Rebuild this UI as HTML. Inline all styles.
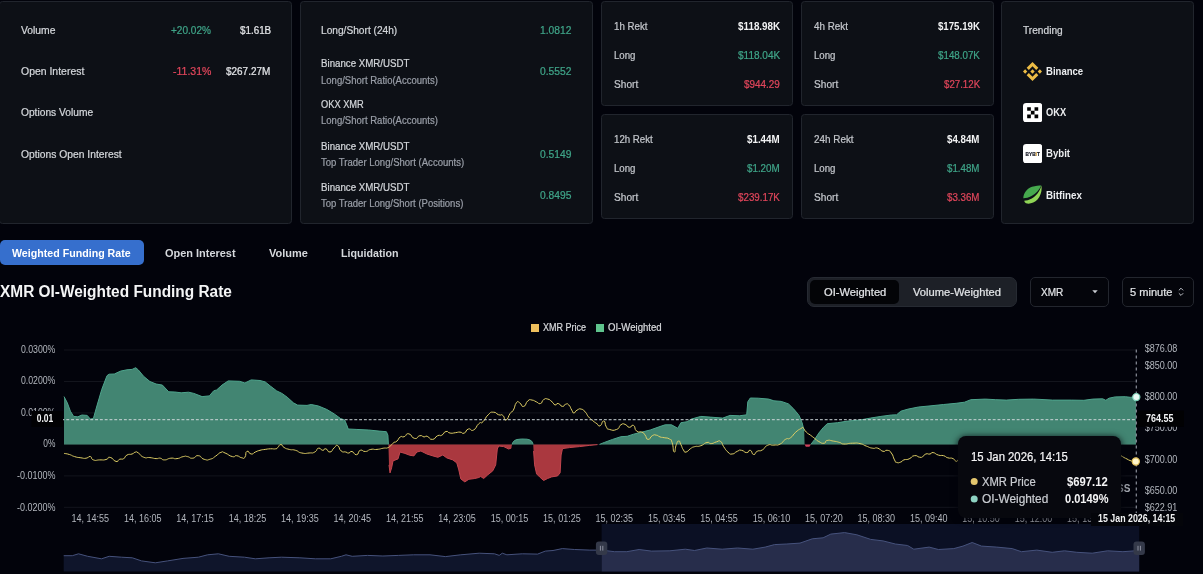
<!DOCTYPE html>
<html lang="en"><head><meta charset="utf-8"><title>XMR OI-Weighted Funding Rate</title>
<style>
html,body{margin:0;padding:0}
body{width:1203px;height:574px;overflow:hidden;position:relative;background:#02030b;font-family:"Liberation Sans",sans-serif;color:#d3d6da}
.card{position:absolute;box-sizing:border-box;background:#0d1016;border:1px solid #21252d;border-radius:3.5px}
.t{position:absolute;white-space:nowrap;line-height:1;transform-origin:0 0;display:block;-webkit-text-stroke:.22px currentColor}
.chart{position:absolute;left:0;top:0}
.tab{position:absolute;left:0;top:240px;width:144px;height:25px;border-radius:5px;background:#366fcd}
.seg{position:absolute;left:807px;top:277px;width:210px;height:29.5px;border-radius:7px;background:#1d2027;border:1px solid #262a32;box-sizing:border-box}
.segon{position:absolute;left:2px;top:2px;width:89px;height:23.5px;border-radius:5px;background:#030407}
.sel{position:absolute;top:277px;height:29.5px;box-sizing:border-box;border:1px solid #23262e;border-radius:5px;background:#04050b}
.ico{position:absolute}
.tabs,.head,.legend{position:absolute;left:0;top:0}
.tip{position:absolute;left:958px;top:436px;width:163px;height:81.5px;border-radius:8px;background:#07080e;box-shadow:0 1px 6px 1px rgba(2,3,11,.75)}
.xlab{position:absolute;left:1091px;top:513px;width:92px;height:12.5px;background:#04050a}
.sq{position:absolute;width:8px;height:8px;top:324px}
#w{position:absolute;left:0;top:0;width:1203px;height:574px;will-change:transform}
</style></head><body><div id="w">
<div class="card stats" style="left:-1px;top:1px;width:293px;height:223px">
<span class="t" style="left:20.5px;top:23.5px;font-size:10px;color:#d3d6da;transform:scaleX(1.034)">Volume</span>
<span class="t" style="left:171.0px;top:23.5px;font-size:10px;color:#3fa488;transform:scaleX(1.006)">+20.02%</span>
<span class="t" style="left:239.5px;top:23.5px;font-size:10px;color:#e4e6e9;transform:scaleX(0.984)">$1.61B</span>
<span class="t" style="left:20.5px;top:64.8px;font-size:10px;color:#d3d6da;transform:scaleX(1.045)">Open Interest</span>
<span class="t" style="left:172.6px;top:64.8px;font-size:10px;color:#e0465b;transform:scaleX(1.052)">-11.31%</span>
<span class="t" style="left:226.4px;top:64.8px;font-size:10px;color:#e4e6e9;transform:scaleX(0.996)">$267.27M</span>
<span class="t" style="left:20.5px;top:106.1px;font-size:10px;color:#d3d6da;transform:scaleX(1.021)">Options Volume</span>
<span class="t" style="left:20.5px;top:147.5px;font-size:10px;color:#d3d6da;transform:scaleX(1.029)">Options Open Interest</span>
</div>
<div class="card ratios" style="left:300px;top:1px;width:293px;height:223px">
<span class="t" style="left:20.2px;top:23.5px;font-size:10px;color:#d3d6da;transform:scaleX(1.016)">Long/Short (24h)</span>
<span class="t" style="left:238.6px;top:23.5px;font-size:10px;color:#3fa488;transform:scaleX(1.026)">1.0812</span>
<span class="t" style="left:20.2px;top:56.7px;font-size:10px;color:#d3d6da;transform:scaleX(0.971)">Binance XMR/USDT</span>
<span class="t" style="left:20.2px;top:73.5px;font-size:10px;color:#9a9fa8;transform:scaleX(0.952)">Long/Short Ratio(Accounts)</span>
<span class="t" style="left:238.6px;top:64.8px;font-size:10px;color:#3fa488;transform:scaleX(1.026)">0.5552</span>
<span class="t" style="left:20.2px;top:98.0px;font-size:10px;color:#d3d6da;transform:scaleX(0.928)">OKX XMR</span>
<span class="t" style="left:20.2px;top:114.0px;font-size:10px;color:#9a9fa8;transform:scaleX(0.952)">Long/Short Ratio(Accounts)</span>
<span class="t" style="left:20.2px;top:139.7px;font-size:10px;color:#d3d6da;transform:scaleX(0.971)">Binance XMR/USDT</span>
<span class="t" style="left:20.2px;top:155.7px;font-size:10px;color:#9a9fa8;transform:scaleX(0.954)">Top Trader Long/Short (Accounts)</span>
<span class="t" style="left:238.6px;top:147.5px;font-size:10px;color:#3fa488;transform:scaleX(1.026)">0.5149</span>
<span class="t" style="left:20.2px;top:180.6px;font-size:10px;color:#d3d6da;transform:scaleX(0.971)">Binance XMR/USDT</span>
<span class="t" style="left:20.2px;top:196.6px;font-size:10px;color:#9a9fa8;transform:scaleX(0.952)">Top Trader Long/Short (Positions)</span>
<span class="t" style="left:238.6px;top:188.8px;font-size:10px;color:#3fa488;transform:scaleX(1.026)">0.8495</span>
</div>
<div class="card rekt1h" style="left:601px;top:1px;width:192px;height:105px">
<span class="t" style="left:12.4px;top:19.5px;font-size:10px;color:#c3c6cb;transform:scaleX(0.972)">1h Rekt</span>
<span class="t" style="left:135.5px;top:19.5px;font-size:10px;color:#f2f3f4;transform:scaleX(0.985);font-weight:700;-webkit-text-stroke:0">$118.98K</span>
<span class="t" style="left:12.2px;top:48.8px;font-size:10px;color:#c3c6cb;transform:scaleX(0.966)">Long</span>
<span class="t" style="left:135.5px;top:48.8px;font-size:10px;color:#3fa488;transform:scaleX(1.003)">$118.04K</span>
<span class="t" style="left:12.0px;top:77.9px;font-size:10px;color:#c3c6cb;transform:scaleX(1.012)">Short</span>
<span class="t" style="left:141.8px;top:77.9px;font-size:10px;color:#e0465b;transform:scaleX(0.993)">$944.29</span>
</div>
<div class="card rekt4h" style="left:801px;top:1px;width:193px;height:105px">
<span class="t" style="left:12.4px;top:19.5px;font-size:10px;color:#c3c6cb;transform:scaleX(0.983)">4h Rekt</span>
<span class="t" style="left:135.8px;top:19.5px;font-size:10px;color:#f2f3f4;transform:scaleX(0.966);font-weight:700;-webkit-text-stroke:0">$175.19K</span>
<span class="t" style="left:12.2px;top:48.8px;font-size:10px;color:#c3c6cb;transform:scaleX(0.966)">Long</span>
<span class="t" style="left:135.8px;top:48.8px;font-size:10px;color:#3fa488;transform:scaleX(0.978)">$148.07K</span>
<span class="t" style="left:12.0px;top:77.9px;font-size:10px;color:#c3c6cb;transform:scaleX(1.012)">Short</span>
<span class="t" style="left:141.6px;top:77.9px;font-size:10px;color:#e0465b;transform:scaleX(0.969)">$27.12K</span>
</div>
<div class="card rekt12h" style="left:601px;top:114px;width:192px;height:105px">
<span class="t" style="left:12.4px;top:19.5px;font-size:10px;color:#c3c6cb;transform:scaleX(0.969)">12h Rekt</span>
<span class="t" style="left:145.0px;top:19.5px;font-size:10px;color:#f2f3f4;transform:scaleX(0.980);font-weight:700;-webkit-text-stroke:0">$1.44M</span>
<span class="t" style="left:12.2px;top:48.8px;font-size:10px;color:#c3c6cb;transform:scaleX(0.966)">Long</span>
<span class="t" style="left:145.0px;top:48.8px;font-size:10px;color:#3fa488;transform:scaleX(0.980)">$1.20M</span>
<span class="t" style="left:12.0px;top:77.9px;font-size:10px;color:#c3c6cb;transform:scaleX(1.012)">Short</span>
<span class="t" style="left:135.8px;top:77.9px;font-size:10px;color:#e0465b;transform:scaleX(0.978)">$239.17K</span>
</div>
<div class="card rekt24h" style="left:801px;top:114px;width:193px;height:105px">
<span class="t" style="left:12.4px;top:19.5px;font-size:10px;color:#c3c6cb;transform:scaleX(0.989)">24h Rekt</span>
<span class="t" style="left:145.2px;top:19.5px;font-size:10px;color:#f2f3f4;transform:scaleX(0.974);font-weight:700;-webkit-text-stroke:0">$4.84M</span>
<span class="t" style="left:12.2px;top:48.8px;font-size:10px;color:#c3c6cb;transform:scaleX(0.966)">Long</span>
<span class="t" style="left:145.2px;top:48.8px;font-size:10px;color:#3fa488;transform:scaleX(0.974)">$1.48M</span>
<span class="t" style="left:12.0px;top:77.9px;font-size:10px;color:#c3c6cb;transform:scaleX(1.012)">Short</span>
<span class="t" style="left:145.2px;top:77.9px;font-size:10px;color:#e0465b;transform:scaleX(0.974)">$3.36M</span>
</div>
<div class="card trending" style="left:1001px;top:1px;width:193px;height:223px">
<svg class="ico" style="left:20.8px;top:59.7px" width="19" height="19" viewBox="0 0 126.61 126.61"><path fill="#ecbc45" d="M38.73 53.2l24.59-24.58 24.6 24.6 14.3-14.31L63.32 0 24.42 38.9l14.31 14.3zM0 63.31l14.3-14.31 14.31 14.31-14.31 14.3L0 63.31zm38.73 10.11l24.59 24.59 24.6-24.6 14.31 14.29-38.9 38.91-38.91-38.88 14.31-14.31zM98 63.31l14.3-14.31 14.31 14.3-14.31 14.32L98 63.31zM77.83 63.3L63.32 48.78 52.59 59.51l-1.24 1.23-2.54 2.54 14.51 14.5 14.51-14.47z"/></svg>
<svg class="ico" style="left:20.5px;top:101.0px" width="19.4" height="19.4" viewBox="0 0 20 20"><rect width="20" height="20" rx="3.4" fill="#fff"/><path fill="#000" d="M4.3 4.3h3.8v3.8H4.3zM11.9 4.3h3.8v3.8h-3.8zM8.1 8.1h3.8v3.8H8.1zM4.3 11.9h3.8v3.8H4.3zM11.9 11.9h3.8v3.8h-3.8z"/></svg>
<svg class="ico" style="left:20.5px;top:141.8px" width="19.4" height="19.4" viewBox="0 0 20 20"><rect width="20" height="20" rx="3.4" fill="#fff"/><text x="2.6" y="12" font-family="Liberation Sans, sans-serif" font-size="5.4" font-weight="700" fill="#0b0e1a" stroke="#0b0e1a" stroke-width=".15" textLength="14.8" lengthAdjust="spacingAndGlyphs">BYB<tspan fill="#f7a600">I</tspan>T</text></svg>
<svg class="ico" style="left:20.6px;top:183.2px" width="19" height="19" viewBox="0 0 19 19"><path fill="#46a94e" d="M.3 13.200C.5 8 4 3.500 9 1.800 12.500 .6 16 .4 18.300 .4 16.500 4.500 13 8.500 8.500 11 5.500 12.600 2.500 13.300 .3 13.200z"/><path fill="#8fd556" d="M1.200 15.800C6 15.600 11 13 14.500 8.500 16.500 6 17.800 3 18.400 .5 19.200 5 18 10.500 14.500 14.500 11.500 18 6.500 19.300 3 18.300 2 17.800 1.500 16.800 1.200 15.800z"/></svg>
<span class="t" style="left:20.7px;top:23.5px;font-size:10px;color:#d3d6da;transform:scaleX(1.015)">Trending</span>
<span class="t" style="left:43.9px;top:64.6px;font-size:10px;color:#eceef0;transform:scaleX(0.956);font-weight:700;-webkit-text-stroke:0">Binance</span>
<span class="t" style="left:43.9px;top:105.9px;font-size:10px;color:#eceef0;transform:scaleX(0.927);font-weight:700;-webkit-text-stroke:0">OKX</span>
<span class="t" style="left:43.9px;top:146.7px;font-size:10px;color:#eceef0;transform:scaleX(0.960);font-weight:700;-webkit-text-stroke:0">Bybit</span>
<span class="t" style="left:44.2px;top:188.7px;font-size:10px;color:#eceef0;transform:scaleX(0.982);font-weight:700;-webkit-text-stroke:0">Bitfinex</span>
</div>

<div class="tabs">
<div class="tab"><span class="t" style="left:12.3px;top:8.1px;font-size:10.5px;color:#ffffff;transform:scaleX(1.014);font-weight:700;-webkit-text-stroke:0">Weighted Funding Rate</span></div>
<span class="t" style="left:164.8px;top:248.1px;font-size:10.5px;color:#d5d8dc;transform:scaleX(1.043);font-weight:700;-webkit-text-stroke:0">Open Interest</span>
<span class="t" style="left:268.8px;top:248.1px;font-size:10.5px;color:#d5d8dc;transform:scaleX(1.047);font-weight:700;-webkit-text-stroke:0">Volume</span>
<span class="t" style="left:341.0px;top:248.1px;font-size:10.5px;color:#d5d8dc;transform:scaleX(1.016);font-weight:700;-webkit-text-stroke:0">Liquidation</span>
</div>
<div class="head">
<div class="seg"><div class="segon"></div><span class="t" style="left:15.6px;top:8.6px;font-size:11px;color:#e2e4e7;transform:scaleX(1.012)">OI-Weighted</span><span class="t" style="left:105.1px;top:8.6px;font-size:11px;color:#e2e4e7;transform:scaleX(1.015)">Volume-Weighted</span></div>
<div class="sel" style="left:1030px;width:79px"><span class="t" style="left:9.5px;top:8.5px;font-size:11px;color:#e2e4e7;transform:scaleX(0.912)">XMR</span><svg class="ico" style="left:61.4px;top:12.2px" width="6" height="3.4" viewBox="0 0 7 4"><path d="M.3.2h6.400L3.500 3.800z" fill="#c9ccd2"/></svg></div>
<div class="sel" style="left:1122px;width:72px"><span class="t" style="left:6.6px;top:8.5px;font-size:11px;color:#e2e4e7;transform:scaleX(1.007)">5 minute</span><svg class="ico" style="left:55.0px;top:9.0px" width="6" height="9.6" viewBox="0 0 7 11"><path d="M1 3.800L3.500 1.300 6 3.800M1 7.200l2.500 2.500L6 7.200" fill="none" stroke="#c9ccd2" stroke-width="1.100"/></svg></div>
</div>
<div class="legend">
<div class="sq" style="left:531px;background:#eebf5c"></div><span class="t" style="left:542.9px;top:322.5px;font-size:10px;color:#d8dadd;transform:scaleX(0.898)">XMR Price</span>
<div class="sq" style="left:596.3px;background:#5fc48d"></div><span class="t" style="left:608.4px;top:322.5px;font-size:10px;color:#d8dadd;transform:scaleX(0.958)">OI-Weighted</span>
</div>
<svg class="chart" width="1203" height="574" viewBox="0 0 1203 574" font-family="Liberation Sans, sans-serif">
<line x1="64" x2="1136" y1="350" y2="350" stroke="#13151d" stroke-width="1"/>
<line x1="64" x2="1136" y1="381.5" y2="381.5" stroke="#13151d" stroke-width="1"/>
<line x1="64" x2="1136" y1="412.9" y2="412.9" stroke="#13151d" stroke-width="1"/>
<line x1="64" x2="1136" y1="444.4" y2="444.4" stroke="#13151d" stroke-width="1"/>
<line x1="64" x2="1136" y1="475.9" y2="475.9" stroke="#13151d" stroke-width="1"/>
<line x1="64" x2="1136" y1="507.3" y2="507.3" stroke="#13151d" stroke-width="1"/>
<polygon points="64.0,444.4 64.0,396.6 67.3,402.8 70.4,411.2 73.6,416.4 77.8,416.8 81.9,415.0 87.2,415.4 90.3,419.1 93.4,418.5 96.6,407.0 101.8,389.3 107.0,375.7 109.1,374.2 114.3,374.0 120.6,371.1 126.9,369.8 132.1,369.4 135.7,367.7 138.4,370.0 143.6,376.3 149.9,381.5 156.1,384.0 162.4,385.1 168.7,391.8 174.9,392.0 181.2,392.8 188.5,392.2 193.8,393.4 202.1,396.6 209.4,395.9 213.6,390.9 216.7,389.9 222.0,385.1 228.2,380.9 239.7,381.3 244.9,383.0 251.2,379.9 260.0,380.5 265.2,381.9 270.4,386.1 276.7,390.9 281.9,393.4 287.2,397.2 293.4,402.8 297.6,405.1 307.0,405.4 311.2,404.5 318.5,406.0 326.9,409.5 334.2,413.9 340.5,418.5 344.6,420.0 346.7,424.8 348.2,429.0 356.1,429.4 368.7,430.0 379.1,431.1 386.4,431.7 387.9,435.2 388.4,444.4" fill="#428572"/>
<polygon points="388.4,444.4 389.0,464.9 390.0,472.9 391.6,467.9 393.0,460.9 398.0,458.9 400.0,452.0 404.9,453.4 409.9,455.3 413.9,455.9 416.9,452.0 420.9,451.0 426.9,454.0 432.9,455.9 437.9,457.3 442.8,455.0 446.8,457.9 452.8,459.9 456.8,462.9 458.8,469.9 460.8,478.9 464.8,481.9 468.8,479.3 474.8,478.5 478.8,477.5 480.7,476.5 483.7,478.5 487.7,474.9 492.7,470.9 495.7,464.9 497.3,449.0 498.7,446.0 503.7,446.6 508.7,449.0 511.3,448.0 512.1,444.4" fill="#aa383f"/>
<polygon points="512.1,444.4 512.8,442.5 514.5,440.5 517.0,439.5 521.6,439.0 527.0,439.2 530.0,440.0 532.0,441.6 533.2,444.4" fill="#428572"/>
<polygon points="533.2,444.4 533.6,451.0 534.6,464.9 536.6,473.9 539.6,476.9 543.6,480.5 547.6,478.5 551.6,476.9 557.6,475.9 560.1,472.9 561.1,455.0 562.5,448.6 569.5,447.6 579.5,446.6 589.5,445.4 597.5,444.6 599.5,444.4" fill="#aa383f"/>
<polygon points="599.5,444.4 604.2,442.5 612.6,439.4 620.9,436.7 627.2,436.3 633.5,434.2 641.8,432.1 650.2,430.0 660.0,426.5 665.2,424.8 671.5,424.8 677.8,428.3 680.9,422.7 687.2,421.7 691.3,419.1 700.8,416.4 710.2,417.1 722.7,418.1 730.0,415.4 739.4,415.8 746.7,414.8 747.8,401.8 750.3,398.0 758.2,398.2 768.7,399.1 773.9,400.8 781.2,401.4 788.5,403.9 793.8,409.1 799.0,415.4 802.1,422.7 804.2,431.1 804.6,444.4" fill="#428572"/>
<polygon points="804.6,444.4 805.9,446.7 809.4,446.7 810.9,444.4" fill="#d0405a"/>
<polygon points="810.9,444.4 814.7,439.4 818.8,433.1 823.0,427.9 827.2,423.7 837.6,422.7 848.1,421.0 860.0,420.0 870.4,418.1 880.9,416.4 891.3,415.0 896.6,414.8 900.8,411.2 908.1,409.1 918.5,407.0 929.0,406.0 943.6,404.5 956.1,403.3 964.5,402.2 970.8,399.7 985.4,399.1 995.8,399.7 1006.3,400.1 1018.8,399.3 1033.5,399.1 1040.0,399.4 1052.5,400.1 1071.3,400.1 1083.9,400.3 1092.7,399.1 1102.7,398.8 1105.8,400.3 1109.0,398.2 1115.2,396.9 1125.3,396.7 1130.3,397.3 1136.0,396.9 1136.0,444.4" fill="#428572"/>
<polyline points="64.0,396.6 67.3,402.8 70.4,411.2 73.6,416.4 77.8,416.8 81.9,415.0 87.2,415.4 90.3,419.1 93.4,418.5 96.6,407.0 101.8,389.3 107.0,375.7 109.1,374.2 114.3,374.0 120.6,371.1 126.9,369.8 132.1,369.4 135.7,367.7 138.4,370.0 143.6,376.3 149.9,381.5 156.1,384.0 162.4,385.1 168.7,391.8 174.9,392.0 181.2,392.8 188.5,392.2 193.8,393.4 202.1,396.6 209.4,395.9 213.6,390.9 216.7,389.9 222.0,385.1 228.2,380.9 239.7,381.3 244.9,383.0 251.2,379.9 260.0,380.5 265.2,381.9 270.4,386.1 276.7,390.9 281.9,393.4 287.2,397.2 293.4,402.8 297.6,405.1 307.0,405.4 311.2,404.5 318.5,406.0 326.9,409.5 334.2,413.9 340.5,418.5 344.6,420.0 346.7,424.8 348.2,429.0 356.1,429.4 368.7,430.0 379.1,431.1 386.4,431.7 387.9,435.2 388.4,444.4" fill="none" stroke="#4ea58d" stroke-width="1" stroke-linejoin="round"/>
<polyline points="512.1,444.4 512.8,442.5 514.5,440.5 517.0,439.5 521.6,439.0 527.0,439.2 530.0,440.0 532.0,441.6 533.2,444.4" fill="none" stroke="#4ea58d" stroke-width="1" stroke-linejoin="round"/>
<polyline points="599.5,444.4 604.2,442.5 612.6,439.4 620.9,436.7 627.2,436.3 633.5,434.2 641.8,432.1 650.2,430.0 660.0,426.5 665.2,424.8 671.5,424.8 677.8,428.3 680.9,422.7 687.2,421.7 691.3,419.1 700.8,416.4 710.2,417.1 722.7,418.1 730.0,415.4 739.4,415.8 746.7,414.8 747.8,401.8 750.3,398.0 758.2,398.2 768.7,399.1 773.9,400.8 781.2,401.4 788.5,403.9 793.8,409.1 799.0,415.4 802.1,422.7 804.2,431.1" fill="none" stroke="#4ea58d" stroke-width="1" stroke-linejoin="round"/>
<polyline points="810.9,444.4 814.7,439.4 818.8,433.1 823.0,427.9 827.2,423.7 837.6,422.7 848.1,421.0 860.0,420.0 870.4,418.1 880.9,416.4 891.3,415.0 896.6,414.8 900.8,411.2 908.1,409.1 918.5,407.0 929.0,406.0 943.6,404.5 956.1,403.3 964.5,402.2 970.8,399.7 985.4,399.1 995.8,399.7 1006.3,400.1 1018.8,399.3 1033.5,399.1 1040.0,399.4 1052.5,400.1 1071.3,400.1 1083.9,400.3 1092.7,399.1 1102.7,398.8 1105.8,400.3 1109.0,398.2 1115.2,396.9 1125.3,396.7 1130.3,397.3 1136.0,396.9" fill="none" stroke="#4ea58d" stroke-width="1" stroke-linejoin="round"/>
<polyline points="389.0,464.9 390.0,472.9 391.6,467.9 393.0,460.9 398.0,458.9 400.0,452.0 404.9,453.4 409.9,455.3 413.9,455.9 416.9,452.0 420.9,451.0 426.9,454.0 432.9,455.9 437.9,457.3 442.8,455.0 446.8,457.9 452.8,459.9 456.8,462.9 458.8,469.9 460.8,478.9 464.8,481.9 468.8,479.3 474.8,478.5 478.8,477.5 480.7,476.5 483.7,478.5 487.7,474.9 492.7,470.9 495.7,464.9 497.3,449.0 498.7,446.0 503.7,446.6 508.7,449.0 511.3,448.0" fill="none" stroke="#c2464f" stroke-width="1" stroke-linejoin="round"/>
<polyline points="533.6,451.0 534.6,464.9 536.6,473.9 539.6,476.9 543.6,480.5 547.6,478.5 551.6,476.9 557.6,475.9 560.1,472.9 561.1,455.0 562.5,448.6 569.5,447.6 579.5,446.6 589.5,445.4 597.5,444.6" fill="none" stroke="#c2464f" stroke-width="1" stroke-linejoin="round"/>
<path d="M64.2 453.4C66.0 453.8 65.8 453.4 69.4 454.5C73.0 455.6 70.6 455.4 74.6 456.6C78.6 457.8 76.9 457.2 80.9 457.8C84.9 458.4 82.8 458.6 86.1 458.2C89.4 457.8 87.7 456.0 90.3 456.6C92.9 457.2 90.1 458.7 93.4 459.9C96.7 461.1 95.3 460.0 99.7 459.9C104.1 459.8 102.3 460.4 106.0 459.5C109.7 458.6 106.7 456.7 110.2 457.4C113.7 458.1 112.7 460.7 116.0 461.4C119.3 462.1 116.9 460.3 119.6 459.3C122.3 458.3 121.1 460.1 123.7 458.6C126.3 457.1 124.0 456.7 126.9 455.1C129.8 453.5 129.2 455.0 132.1 454.0C135.0 453.0 133.0 452.6 135.2 452.2C137.4 451.8 135.5 451.2 138.4 453.0C141.3 454.8 139.6 455.6 143.6 457.2C147.6 458.8 145.5 457.1 149.9 457.6C154.3 458.1 152.5 458.4 156.1 458.6C159.7 458.8 157.4 457.7 160.3 458.2C163.2 458.7 160.8 459.9 164.5 459.9C168.2 459.9 166.4 458.7 170.8 458.2C175.2 457.7 172.6 459.2 177.0 458.6C181.4 458.0 179.6 457.3 183.3 456.6C187.0 455.9 184.2 456.0 187.5 456.6C190.8 457.2 188.9 458.5 192.7 458.2C196.5 457.9 194.3 455.3 198.3 455.7C202.3 456.1 199.9 458.1 204.2 459.3C208.5 460.5 206.5 460.2 210.5 459.1C214.5 458.0 212.1 458.4 215.7 456.1C219.3 453.8 217.6 453.5 220.9 452.4C224.2 451.3 221.1 451.5 225.1 453.0C229.1 454.5 228.4 455.7 232.4 456.6C236.4 457.5 233.3 455.3 236.6 455.7C239.9 456.1 238.9 457.3 241.8 457.8C244.7 458.3 243.1 459.5 244.9 457.2C246.7 454.9 244.8 452.4 247.0 451.3C249.2 450.2 248.3 453.8 251.2 454.0C254.1 454.2 252.3 453.3 255.4 452.0C258.5 450.7 256.6 451.2 260.0 450.3C263.4 449.4 261.6 449.9 265.2 449.4C268.8 448.9 266.7 449.0 270.4 448.8C274.1 448.6 273.1 449.3 275.7 448.8C278.3 448.3 276.0 448.9 277.8 447.4C279.6 445.9 278.7 444.6 280.9 444.6C283.1 444.6 281.1 445.7 284.0 447.4C286.9 449.1 285.3 448.4 289.3 449.4C293.3 450.4 291.1 449.0 295.5 450.3C299.9 451.6 297.0 452.1 301.8 453.0C306.6 453.9 304.6 453.4 309.1 453.0C313.7 452.6 311.5 453.7 314.8 452.0C318.1 450.3 315.7 448.8 318.5 448.2C321.3 447.6 320.1 450.1 322.7 450.3C325.3 450.5 323.2 448.2 325.8 448.8C328.4 449.4 327.1 452.4 330.0 452.0C332.9 451.6 331.5 450.0 334.2 447.8C336.9 445.6 335.3 444.6 337.7 445.7C340.1 446.8 338.3 448.7 341.1 450.9C343.9 453.1 343.0 451.3 345.7 452.0C348.4 452.7 346.6 453.2 348.8 453.0C351.0 452.8 349.3 450.9 352.0 451.5C354.7 452.1 353.7 455.1 356.6 454.7C359.5 454.3 357.2 451.4 360.3 450.3C363.4 449.2 361.8 451.8 365.5 451.5C369.2 451.2 366.8 450.1 370.8 449.4C374.8 448.7 372.6 449.8 377.0 449.4C381.4 449.0 379.6 448.8 383.3 448.2C387.0 447.6 384.9 448.7 387.5 447.8C390.1 446.9 388.4 447.5 390.6 445.7C392.8 443.9 391.6 444.2 393.8 442.6C396.0 441.0 394.6 443.1 396.9 441.1C399.2 439.1 397.8 438.4 400.4 436.9C403.0 435.4 401.3 437.8 404.2 436.7C407.1 435.6 405.2 433.2 408.8 433.8C412.4 434.4 410.7 437.7 414.6 438.4C418.5 439.1 416.6 436.2 419.9 435.7C423.2 435.2 421.5 436.7 424.1 436.9C426.7 437.1 424.3 435.4 427.2 436.3C430.1 437.2 428.8 439.6 432.4 439.4C436.0 439.2 434.3 437.2 437.6 435.7C440.9 434.2 438.9 436.7 441.8 435.2C444.7 433.7 443.1 432.2 446.0 431.5C448.9 430.8 446.9 432.7 450.2 433.1C453.5 433.5 452.0 433.1 455.4 432.7C458.8 432.3 456.9 432.0 460.0 432.1C463.1 432.2 461.3 434.2 464.2 433.1C467.1 432.0 465.1 430.1 468.4 429.0C471.7 427.9 470.0 431.9 473.6 430.0C477.2 428.1 475.5 426.6 478.8 423.7C482.1 420.8 479.7 424.8 483.0 421.7C486.3 418.6 484.6 418.1 488.2 414.8C491.8 411.5 489.7 412.2 493.4 412.2C497.1 412.2 495.4 413.7 498.7 414.8C502.0 415.9 500.2 413.6 502.8 415.4C505.4 417.2 503.4 420.7 506.0 420.0C508.6 419.3 507.6 416.7 510.2 413.3C512.8 409.9 511.1 413.9 513.3 410.2C515.5 406.5 514.2 405.4 516.4 402.8C518.6 400.2 517.0 401.5 519.6 402.8C522.2 404.1 520.8 407.1 523.7 406.4C526.6 405.7 525.0 403.0 527.9 400.8C530.8 398.6 529.2 399.8 532.1 400.1C535.0 400.5 533.4 400.6 536.3 401.8C539.2 403.0 537.9 404.2 540.5 403.5C543.1 402.8 541.0 401.2 543.6 399.7C546.2 398.2 544.9 398.4 547.8 399.1C550.7 399.8 549.4 399.8 552.0 401.8C554.6 403.8 552.9 404.3 555.1 404.9C557.3 405.5 555.6 403.0 558.2 403.5C560.8 404.0 559.8 406.1 562.4 406.4C565.0 406.7 563.3 404.8 565.5 404.3C567.7 403.8 566.5 402.8 568.7 404.9C570.9 407.0 570.0 407.4 571.8 410.2C573.6 413.0 572.1 412.9 573.9 412.9C575.7 412.9 574.4 411.5 577.0 410.2C579.6 408.9 578.3 408.4 581.2 409.1C584.1 409.8 582.8 409.5 585.4 412.2C588.0 414.9 585.9 413.9 588.5 416.8C591.1 419.7 589.8 418.2 592.7 420.6C595.6 423.0 594.3 421.9 596.9 423.7C599.5 425.5 597.6 426.7 600.0 425.8C602.4 424.9 601.6 420.6 603.8 421.0C606.0 421.4 604.3 424.0 606.3 426.9C608.3 429.8 605.8 428.5 609.4 429.4C613.0 430.3 612.7 431.0 616.7 429.4C620.7 427.8 618.0 426.6 620.9 424.8C623.8 423.1 622.2 423.5 625.1 424.4C628.0 425.3 626.4 426.9 629.3 427.3C632.2 427.7 630.9 424.1 633.5 425.4C636.1 426.7 633.7 428.8 636.6 431.1C639.5 433.4 638.9 430.8 641.8 432.1C644.7 433.4 642.7 432.2 644.9 434.8C647.1 437.4 645.5 439.1 648.1 439.4C650.7 439.7 649.4 437.2 652.3 435.7C655.2 434.2 653.7 434.8 656.4 435.2C659.1 435.6 657.3 436.0 660.0 436.9C662.7 437.8 660.9 437.0 664.2 437.7C667.5 438.4 666.6 437.3 669.4 439.0C672.2 440.7 670.4 437.9 672.1 442.5C673.8 447.1 672.7 451.3 674.2 452.0C675.7 452.7 674.7 448.4 676.3 444.6C677.9 440.8 677.2 441.1 678.8 441.1C680.4 441.1 679.3 441.5 680.9 444.6C682.5 447.7 681.6 447.3 683.4 449.9C685.2 452.5 683.7 452.4 686.1 452.0C688.5 451.6 687.4 450.7 690.3 448.8C693.2 446.9 690.8 447.8 694.5 446.7C698.2 445.6 696.4 447.2 700.8 445.7C705.2 444.2 703.4 443.2 707.0 442.5C710.6 441.8 707.9 443.8 711.2 443.6C714.5 443.4 713.1 442.6 716.4 441.9C719.7 441.2 718.0 439.8 720.6 441.5C723.2 443.2 721.1 443.0 723.7 446.7C726.3 450.4 725.0 449.4 727.9 452.0C730.8 454.6 728.8 454.2 732.1 454.0C735.4 453.8 734.0 452.6 737.3 451.3C740.6 450.0 738.2 449.8 741.5 450.3C744.8 450.8 743.6 452.6 746.7 452.6C749.8 452.6 747.9 449.6 750.3 450.3C752.7 451.0 751.2 454.1 753.6 454.5C756.0 454.9 754.1 452.9 757.2 451.3C760.3 449.7 758.8 452.0 762.4 449.9C766.0 447.8 763.6 447.0 767.6 445.3C771.6 443.6 769.5 445.6 773.9 445.1C778.3 444.6 776.2 446.0 780.2 444.0C784.2 442.0 781.8 441.6 785.4 439.4C789.0 437.2 787.0 440.3 790.6 437.7C794.2 435.1 792.1 435.3 795.8 432.1C799.5 428.9 798.5 430.0 801.1 428.5C803.7 427.0 801.4 426.6 803.2 427.9C805.0 429.2 803.7 429.5 806.3 432.1C808.9 434.7 807.6 433.0 810.5 435.2C813.4 437.4 811.8 436.2 814.7 438.4C817.6 440.6 815.5 439.8 818.8 441.5C822.1 443.2 821.2 443.6 824.1 443.2C827.0 442.8 823.9 441.2 827.2 440.5C830.5 439.8 829.1 440.4 833.5 441.1C837.9 441.8 836.1 441.5 839.7 442.5C843.3 443.5 839.5 443.8 843.9 444.0C848.3 444.2 846.7 443.3 852.3 443.2C857.9 443.1 855.1 442.6 860.0 443.6C864.9 444.6 861.9 444.5 866.3 446.1C870.7 447.7 868.5 447.5 872.5 448.2C876.5 448.9 874.1 447.1 877.8 448.2C881.5 449.3 879.7 450.6 883.0 451.3C886.3 452.0 884.3 449.7 887.2 450.3C890.1 450.9 888.7 449.6 891.3 453.0C893.9 456.4 892.6 456.6 894.5 459.9C896.4 463.2 894.4 461.7 896.6 462.4C898.8 463.1 898.2 462.9 900.8 462.0C903.4 461.1 901.0 461.0 903.9 459.9C906.8 458.8 905.5 460.4 909.1 458.9C912.7 457.4 910.6 456.3 914.3 455.7C918.0 455.1 916.7 456.9 919.6 457.2C922.5 457.5 920.5 457.7 922.7 456.6C924.9 455.5 923.2 454.9 925.8 454.0C928.4 453.1 927.4 454.5 930.0 454.0C932.6 453.5 930.2 452.2 933.1 452.6C936.0 453.0 934.7 454.0 938.4 455.1C942.1 456.2 940.3 454.8 943.6 455.7C946.9 456.6 944.5 456.8 947.8 457.8C951.1 458.8 950.1 457.3 953.0 458.6C955.9 459.9 954.3 460.9 956.1 461.4C957.9 461.9 955.8 461.1 958.2 459.9C960.6 458.7 959.6 457.8 963.0 458.0C966.4 458.2 964.1 460.9 968.0 460.5C971.9 460.1 969.8 458.8 974.0 457.0C978.2 455.2 975.8 455.3 980.0 455.5C984.2 455.7 981.8 458.0 986.0 457.5C990.2 457.0 987.8 455.8 992.0 454.0C996.2 452.2 993.8 452.1 998.0 452.5C1002.2 452.9 999.8 454.8 1004.0 455.0C1008.2 455.2 1005.8 454.6 1010.0 453.0C1014.2 451.4 1011.8 450.9 1016.0 450.5C1020.2 450.1 1017.8 452.4 1022.0 452.0C1026.2 451.6 1023.8 449.7 1028.0 449.5C1032.2 449.3 1029.8 450.1 1034.0 451.5C1038.2 452.9 1035.8 453.7 1040.0 453.5C1044.2 453.3 1041.8 452.6 1046.0 451.0C1050.2 449.4 1047.8 448.8 1052.0 449.0C1056.2 449.2 1053.8 449.8 1058.0 451.5C1062.2 453.2 1059.8 453.8 1064.0 454.0C1068.2 454.2 1065.8 453.6 1070.0 452.0C1074.2 450.4 1071.8 449.9 1076.0 449.5C1080.2 449.1 1077.8 451.5 1082.0 451.0C1086.2 450.5 1083.8 448.4 1088.0 448.0C1092.2 447.6 1089.8 448.4 1094.0 450.0C1098.2 451.6 1095.8 452.3 1100.0 452.5C1104.2 452.7 1101.8 450.3 1106.0 450.5C1110.2 450.7 1107.8 451.6 1112.0 453.0C1116.2 454.4 1114.8 453.6 1118.0 454.5C1121.2 455.4 1118.9 454.6 1121.0 455.7C1123.1 456.8 1121.9 456.3 1124.0 457.5C1126.1 458.7 1124.9 457.9 1127.0 459.0C1129.1 460.1 1127.9 459.7 1130.0 460.5C1132.1 461.3 1131.0 460.9 1133.0 461.3C1135.0 461.7 1134.8 461.4 1135.8 461.5" fill="none" stroke="#e0cf66" stroke-width="1" stroke-linejoin="round"/>
<line x1="61.5" x2="1136" y1="419.6" y2="419.6" stroke="#cdd6d8" stroke-opacity=".8" stroke-width="1.3" stroke-dasharray="2.9 1.9"/>
<line x1="1136.3" x2="1136.3" y1="349.5" y2="514" stroke="#8a8e99" stroke-width="1.2" stroke-dasharray="3 3"/>
<text x="20.9" y="352.6" font-size="10" fill="#b3b7be" textLength="34.5" lengthAdjust="spacingAndGlyphs">0.0300%</text>
<text x="20.9" y="384" font-size="10" fill="#b3b7be" textLength="34.5" lengthAdjust="spacingAndGlyphs">0.0200%</text>
<text x="20.9" y="416" font-size="10" fill="#b3b7be" textLength="34.5" lengthAdjust="spacingAndGlyphs">0.0100%</text>
<text x="43.3" y="447.1" font-size="10" fill="#b3b7be" textLength="12.1" lengthAdjust="spacingAndGlyphs">0%</text>
<text x="16.9" y="478.8" font-size="10" fill="#b3b7be" textLength="38.5" lengthAdjust="spacingAndGlyphs">-0.0100%</text>
<text x="16.9" y="511.1" font-size="10" fill="#b3b7be" textLength="38.5" lengthAdjust="spacingAndGlyphs">-0.0200%</text>
<text x="1144.7" y="352.2" font-size="10" fill="#b3b7be" textLength="32.7" lengthAdjust="spacingAndGlyphs">$876.08</text>
<text x="1144.7" y="368.7" font-size="10" fill="#b3b7be" textLength="32.7" lengthAdjust="spacingAndGlyphs">$850.00</text>
<text x="1144.7" y="399.7" font-size="10" fill="#b3b7be" textLength="32.7" lengthAdjust="spacingAndGlyphs">$800.00</text>
<text x="1144.7" y="431" font-size="10" fill="#b3b7be" textLength="32.7" lengthAdjust="spacingAndGlyphs">$750.00</text>
<text x="1144.7" y="462.5" font-size="10" fill="#b3b7be" textLength="32.7" lengthAdjust="spacingAndGlyphs">$700.00</text>
<text x="1144.7" y="493.8" font-size="10" fill="#b3b7be" textLength="32.7" lengthAdjust="spacingAndGlyphs">$650.00</text>
<text x="1144.7" y="511.4" font-size="10" fill="#b3b7be" textLength="32.7" lengthAdjust="spacingAndGlyphs">$622.91</text>
<text x="71.5" y="521.6" font-size="10" fill="#b3b7be" textLength="37.6" lengthAdjust="spacingAndGlyphs">14, 14:55</text>
<text x="123.9" y="521.6" font-size="10" fill="#b3b7be" textLength="37.6" lengthAdjust="spacingAndGlyphs">14, 16:05</text>
<text x="176.3" y="521.6" font-size="10" fill="#b3b7be" textLength="37.6" lengthAdjust="spacingAndGlyphs">14, 17:15</text>
<text x="228.7" y="521.6" font-size="10" fill="#b3b7be" textLength="37.6" lengthAdjust="spacingAndGlyphs">14, 18:25</text>
<text x="281.1" y="521.6" font-size="10" fill="#b3b7be" textLength="37.6" lengthAdjust="spacingAndGlyphs">14, 19:35</text>
<text x="333.5" y="521.6" font-size="10" fill="#b3b7be" textLength="37.6" lengthAdjust="spacingAndGlyphs">14, 20:45</text>
<text x="385.9" y="521.6" font-size="10" fill="#b3b7be" textLength="37.6" lengthAdjust="spacingAndGlyphs">14, 21:55</text>
<text x="438.3" y="521.6" font-size="10" fill="#b3b7be" textLength="37.6" lengthAdjust="spacingAndGlyphs">14, 23:05</text>
<text x="490.7" y="521.6" font-size="10" fill="#b3b7be" textLength="37.6" lengthAdjust="spacingAndGlyphs">15, 00:15</text>
<text x="543.1" y="521.6" font-size="10" fill="#b3b7be" textLength="37.6" lengthAdjust="spacingAndGlyphs">15, 01:25</text>
<text x="595.5" y="521.6" font-size="10" fill="#b3b7be" textLength="37.6" lengthAdjust="spacingAndGlyphs">15, 02:35</text>
<text x="647.9" y="521.6" font-size="10" fill="#b3b7be" textLength="37.6" lengthAdjust="spacingAndGlyphs">15, 03:45</text>
<text x="700.3" y="521.6" font-size="10" fill="#b3b7be" textLength="37.6" lengthAdjust="spacingAndGlyphs">15, 04:55</text>
<text x="752.7" y="521.6" font-size="10" fill="#b3b7be" textLength="37.6" lengthAdjust="spacingAndGlyphs">15, 06:10</text>
<text x="805.1" y="521.6" font-size="10" fill="#b3b7be" textLength="37.6" lengthAdjust="spacingAndGlyphs">15, 07:20</text>
<text x="857.5" y="521.6" font-size="10" fill="#b3b7be" textLength="37.6" lengthAdjust="spacingAndGlyphs">15, 08:30</text>
<text x="909.9" y="521.6" font-size="10" fill="#b3b7be" textLength="37.6" lengthAdjust="spacingAndGlyphs">15, 09:40</text>
<text x="962.3" y="521.6" font-size="10" fill="#b3b7be" textLength="37.6" lengthAdjust="spacingAndGlyphs">15, 10:50</text>
<text x="1014.7" y="521.6" font-size="10" fill="#b3b7be" textLength="37.6" lengthAdjust="spacingAndGlyphs">15, 12:00</text>
<text x="1067.1" y="521.6" font-size="10" fill="#b3b7be" textLength="37.6" lengthAdjust="spacingAndGlyphs">15, 13:10</text>
<text x="1070.9" y="492" font-size="10" fill="#a6aab3" textLength="59.5" lengthAdjust="spacingAndGlyphs" font-weight="700">COINGLASS</text>
<rect x="31.5" y="411" width="31.5" height="16" fill="#010103"/>
<text x="36.7" y="422" font-size="10" fill="#f2f3f4" textLength="16.5" lengthAdjust="spacingAndGlyphs" font-weight="700">0.01</text>
<rect x="1137.5" y="410.6" width="46.5" height="16.2" fill="#010103"/>
<text x="1145.9" y="422" font-size="10" fill="#f2f3f4" textLength="27.5" lengthAdjust="spacingAndGlyphs" font-weight="700">764.55</text>
<polygon points="63.7,571.6 63.7,555.7 72.3,555.7 78.5,553.8 87.7,556.3 101.5,558.8 109.2,556.3 121.5,557.2 132.3,557.8 141.5,560.9 155.3,562.8 167.6,560.9 183.0,558.4 198.4,557.2 207.6,554.8 218.4,553.8 229.2,556.3 244.5,557.2 255.3,558.8 269.1,557.8 281.4,557.2 299.9,557.8 315.3,558.8 330.7,558.8 341.4,556.3 346.0,554.8 352.2,556.3 367.6,555.4 382.9,556.0 398.3,555.4 413.7,554.8 430.0,554.8 445.4,556.6 460.8,554.8 479.2,553.2 494.6,553.8 499.2,555.4 502.3,553.2 506.9,554.8 522.3,553.8 537.6,554.1 545.3,551.1 553.0,550.5 562.3,548.6 574.6,549.5 589.9,550.1 601.6,550.1 601.6,571.6" fill="#0f152b"/>
<rect x="601.6" y="524" width="537.6" height="47.6" fill="#0b1024"/>
<polygon points="601.6,571.6 601.6,550.1 614.5,551.7 626.8,551.7 639.1,549.5 651.4,551.1 669.9,550.8 685.3,549.2 694.5,550.5 706.8,548.0 722.2,549.2 737.6,548.0 752.9,549.2 765.2,547.1 774.5,544.6 786.8,544.0 800.0,543.1 812.3,538.8 823.1,537.8 830.8,534.1 844.6,532.6 856.9,534.8 870.7,539.4 883.0,540.9 895.3,544.0 907.6,545.5 913.8,549.2 929.2,547.1 938.4,549.5 953.8,548.6 963.0,546.1 972.2,542.5 981.5,546.1 996.8,547.1 1012.2,548.6 1021.4,551.7 1036.8,550.1 1052.2,552.3 1064.5,550.8 1076.8,552.3 1092.2,553.2 1107.6,550.8 1122.9,551.7 1135.2,550.8 1139.2,550.1 1139.2,571.6" fill="#272d4b"/>
<polyline points="63.7,555.7 72.3,555.7 78.5,553.8 87.7,556.3 101.5,558.8 109.2,556.3 121.5,557.2 132.3,557.8 141.5,560.9 155.3,562.8 167.6,560.9 183.0,558.4 198.4,557.2 207.6,554.8 218.4,553.8 229.2,556.3 244.5,557.2 255.3,558.8 269.1,557.8 281.4,557.2 299.9,557.8 315.3,558.8 330.7,558.8 341.4,556.3 346.0,554.8 352.2,556.3 367.6,555.4 382.9,556.0 398.3,555.4 413.7,554.8 430.0,554.8 445.4,556.6 460.8,554.8 479.2,553.2 494.6,553.8 499.2,555.4 502.3,553.2 506.9,554.8 522.3,553.8 537.6,554.1 545.3,551.1 553.0,550.5 562.3,548.6 574.6,549.5 589.9,550.1 601.6,550.1 614.5,551.7 626.8,551.7 639.1,549.5 651.4,551.1 669.9,550.8 685.3,549.2 694.5,550.5 706.8,548.0 722.2,549.2 737.6,548.0 752.9,549.2 765.2,547.1 774.5,544.6 786.8,544.0 800.0,543.1 812.3,538.8 823.1,537.8 830.8,534.1 844.6,532.6 856.9,534.8 870.7,539.4 883.0,540.9 895.3,544.0 907.6,545.5 913.8,549.2 929.2,547.1 938.4,549.5 953.8,548.6 963.0,546.1 972.2,542.5 981.5,546.1 996.8,547.1 1012.2,548.6 1021.4,551.7 1036.8,550.1 1052.2,552.3 1064.5,550.8 1076.8,552.3 1092.2,553.2 1107.6,550.8 1122.9,551.7 1135.2,550.8 1139.2,550.1" fill="none" stroke="#46527c" stroke-width="1"/>
<rect x="595.9" y="541.4" width="11.4" height="13.6" rx="3" fill="#343949"/>
<path d="M600.4 545.8v4.8M602.8000000000001 545.8v4.8" stroke="#a4a8b8" stroke-width=".8"/>
<rect x="1133.5" y="541.4" width="11.4" height="13.6" rx="3" fill="#343949"/>
<path d="M1138.0 545.8v4.8M1140.4 545.8v4.8" stroke="#a4a8b8" stroke-width=".8"/>
<circle cx="1136.3" cy="397.1" r="3.6" fill="#e9fbf5" stroke="#7fd1b9" stroke-width="1.2"/>
<circle cx="1135.8" cy="461.5" r="3.6" fill="#fff6cc" stroke="#e6c35c" stroke-width="1.2"/>
</svg>
<span class="t" style="left:-0.5px;top:284.3px;font-size:16px;color:#f4f5f6;transform:scaleX(0.964);font-weight:700;-webkit-text-stroke:0">XMR OI-Weighted Funding Rate</span>
<div class="tip"><svg class="ico" style="left:11.0px;top:40.0px" width="12" height="30" viewBox="0 0 12 30"><circle cx="5.2" cy="5.500" r="3.500" fill="#e3c56d"/><circle cx="5.2" cy="23" r="3.500" fill="#8ed3c3"/></svg>
<span class="t" style="left:13.0px;top:14.9px;font-size:12px;color:#f4f4f5;transform:scaleX(0.942)">15 Jan 2026, 14:15</span>
<span class="t" style="left:23.5px;top:39.5px;font-size:12px;color:#c9ccd1;transform:scaleX(0.936)">XMR Price</span>
<span class="t" style="left:109.3px;top:39.5px;font-size:12px;color:#f4f4f5;transform:scaleX(0.940);font-weight:700;-webkit-text-stroke:0">$697.12</span>
<span class="t" style="left:23.5px;top:57.4px;font-size:12px;color:#c9ccd1;transform:scaleX(0.987)">OI-Weighted</span>
<span class="t" style="left:106.6px;top:57.4px;font-size:12px;color:#f4f4f5;transform:scaleX(0.918);font-weight:700;-webkit-text-stroke:0">0.0149%</span>
</div>
<div class="xlab"></div>
<span class="t" style="left:1098px;top:514.4px;font-size:10px;font-weight:700;-webkit-text-stroke:0;color:#f2f3f4;transform:scaleX(.885)">15 Jan 2026, 14:15</span>
</div></body></html>
